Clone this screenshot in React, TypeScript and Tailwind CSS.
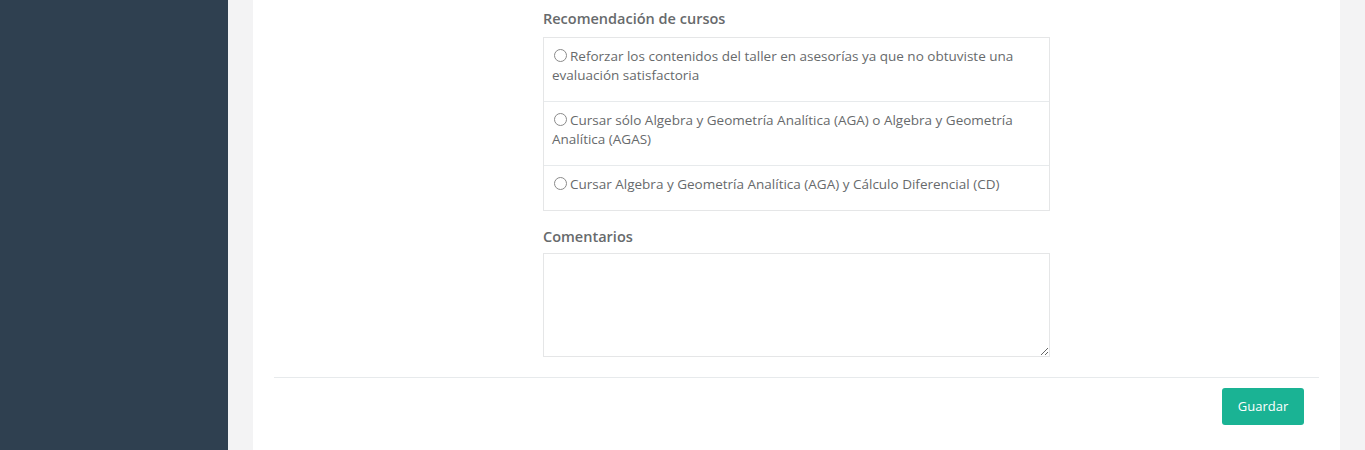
import React from 'react';

const OPTIONS = [
  'Reforzar los contenidos del taller en asesorías ya que no obtuviste una evaluación satisfactoria',
  'Cursar sólo Algebra y Geometría Analítica (AGA) o Algebra y Geometría Analítica (AGAS)',
  'Cursar Algebra y Geometría Analítica (AGA) y Cálculo Diferencial (CD)',
];

const App: React.FC = () => {
  return (
    <div
      className="flex h-[450px] w-full overflow-hidden bg-[#f3f3f4] text-[13.5px] text-[#676a6c]"
      style={{ fontFamily: '"Open Sans", "Liberation Sans", sans-serif' }}
    >
      {/* Sidebar */}
      <aside className="w-[228px] shrink-0 bg-[#2f4050]" />

      {/* Content */}
      <div className="flex-1 pl-[25px] pr-[25px]">
        <div className="h-full bg-white px-[21px]">
          <div className="mx-auto w-[507px]">
            <h3 className="pt-[9px] text-[14.5px] font-semibold leading-[20px]">Recomendación de cursos</h3>
            <div className="mt-[8px] border border-[#e5e6e7]">
              {OPTIONS.map((opt, i) => (
                <div
                  key={i}
                  className={`px-[8px] pt-[9px] ${i === OPTIONS.length - 1 ? 'pb-[16px]' : 'pb-[16px] border-b border-[#e7eaec]'}`}
                >
                  <label className="block leading-[19px]">
                    <span className="ml-[2px] mr-[3px] inline-block h-[13px] w-[13px] rounded-full border-[1.5px] border-[#8a8a8a] align-[-1px]" />
                    {opt}
                  </label>
                </div>
              ))}
            </div>

            <h3 className="mt-[16px] text-[14.5px] font-semibold leading-[20px]">Comentarios</h3>
            <textarea className="mt-[6px] block h-[104px] w-full resize-y border border-[#e5e6e7] outline-none" />
          </div>

          <div className="mt-[20px] border-t border-[#e7eaec]" />
          <div className="flex justify-end pt-[10px] pr-[15px]">
            <button className="h-[37px] w-[82px] rounded-[3px] bg-[#1ab394] text-[13px] text-white">Guardar</button>
          </div>
        </div>
      </div>
    </div>
  );
};

export default App;
